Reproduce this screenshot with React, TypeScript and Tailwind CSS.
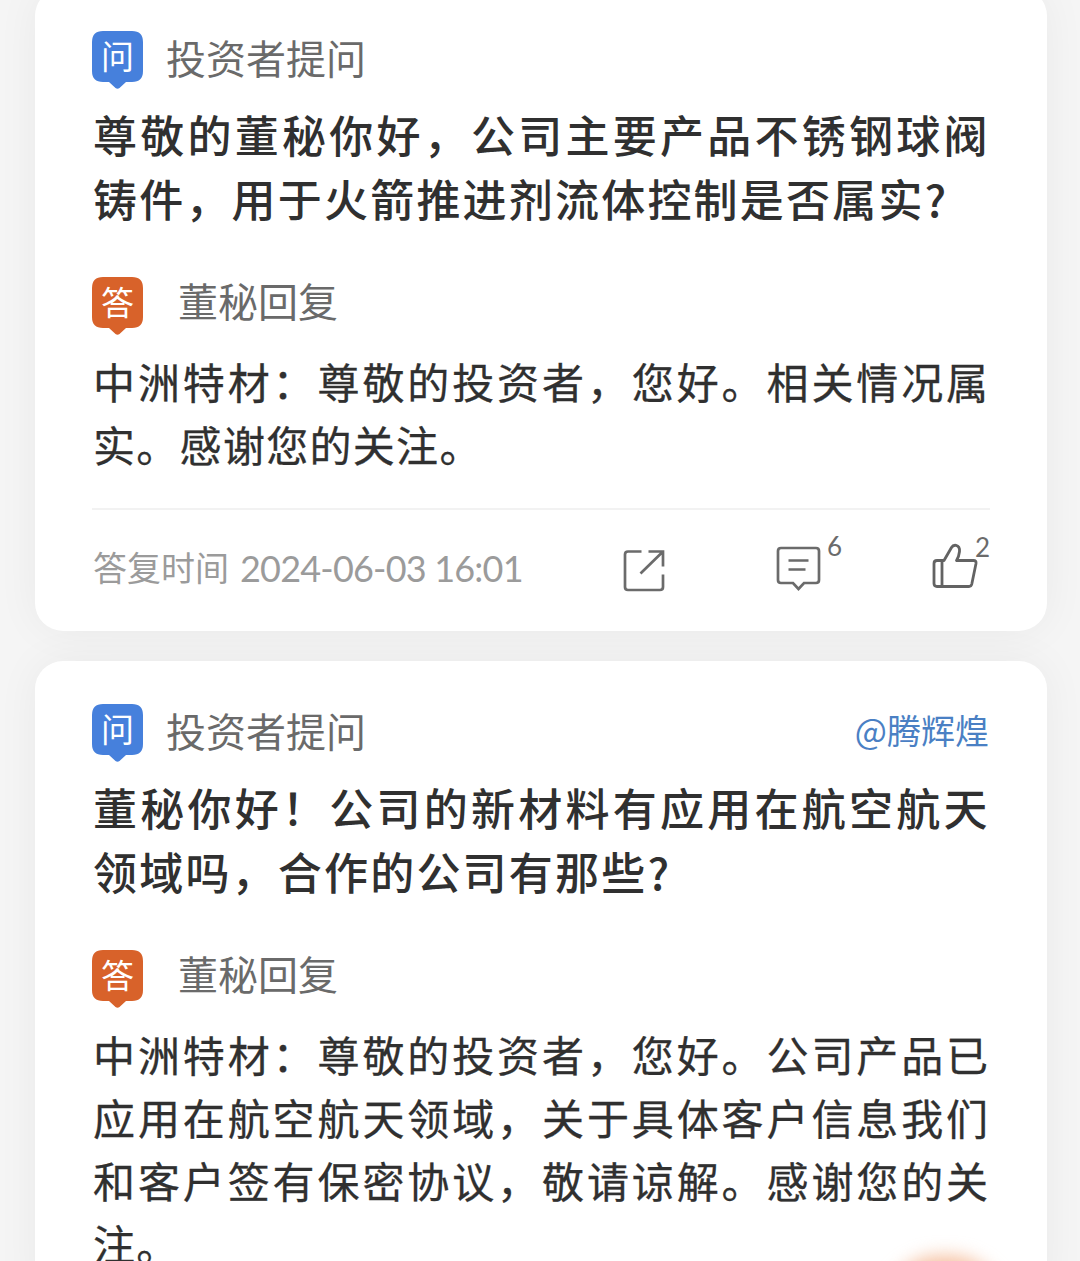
import React from "react";
import clsx from "clsx";

interface Line {
  text: string;
  // tracking is set per line since full lines are justified to the column
  className: string;
}

interface QuestionCardProps {
  user?: string;
  question: Line[];
  answer: Line[];
  className?: string;
  children?: React.ReactNode;
}

const firstQuestion: Line[] = [
  { text: "尊敬的董秘你好，公司主要产品不锈钢球阀", className: "tracking-[3.25px]" },
  { text: "铸件，用于火箭推进剂流体控制是否属实?", className: "tracking-[2.2px]" },
];

const firstAnswer: Line[] = [
  { text: "中洲特材：尊敬的投资者，您好。相关情况属", className: "tracking-[2.9px]" },
  { text: "实。感谢您的关注。", className: "tracking-[1.3px]" },
];

const secondQuestion: Line[] = [
  { text: "董秘你好！公司的新材料有应用在航空航天", className: "tracking-[3.25px]" },
  { text: "领域吗，合作的公司有那些?", className: "tracking-[2.2px]" },
];

const secondAnswer: Line[] = [
  { text: "中洲特材：尊敬的投资者，您好。公司产品已", className: "tracking-[2.9px]" },
  { text: "应用在航空航天领域，关于具体客户信息我们", className: "tracking-[2.9px]" },
  { text: "和客户签有保密协议，敬请谅解。感谢您的关", className: "tracking-[2.9px]" },
  { text: "注。", className: "tracking-[1.3px]" },
];

function Badge({ label, className }: { label: string; className: string }) {
  return (
    <div className={clsx("relative h-[58px] w-[51px] shrink-0", className)}>
      <svg className="absolute inset-0" width="51" height="58" viewBox="0 0 51 58" fill="currentColor">
        <path d="M11 0H40Q51 0 51 11V40Q51 51 40 51H34L27.5 57Q25.5 58.600 23.500 57L17 51H11Q0 51 0 40V11Q0 0 11 0Z" />
      </svg>
      <span className="relative block text-center text-[33px] leading-[48px] text-white">{label}</span>
    </div>
  );
}

function ShareIcon() {
  return (
    <svg width="42" height="43" viewBox="0 0 42 43" fill="none" stroke="#6b6b6b" strokeWidth="2.7">
      <path d="M18.500 2.500H5Q2 2.500 2 5.500V38Q2 41 5 41H37Q40 41 40 38V25.500" />
      <path d="M25.500 2.500H40V17.500M39.500 3L17.500 24.500" />
    </svg>
  );
}

function CommentIcon() {
  return (
    <svg width="45" height="45" viewBox="0 0 45 45" fill="none" stroke="#6b6b6b" strokeWidth="2.7">
      <path d="M5 2H40Q43 2 43 5V34Q43 37 40 37H28L22.500 43L17 37H5Q2 37 2 34V5Q2 2 5 2Z" />
      <path d="M12.500 14.500H32.500M12.500 23.500H29.500" />
    </svg>
  );
}

function ThumbIcon() {
  return (
    <svg width="46" height="46" viewBox="0 0 46 46" fill="none" stroke="#636363" strokeWidth="2.8" strokeLinejoin="round">
      <path d="M12 17.500L19.500 4.500Q21 1.800 24 2.300Q28 3.200 27.500 8.500Q27 13.500 24.500 17.500H41.500Q44.500 17.500 44 20.500L39.800 41Q39.200 43.500 37 43.500H5Q2 43.500 2 40.500V20.500Q2 17.500 5 17.500Z" />
      <path d="M10 17.500V43.500" />
    </svg>
  );
}

function QuestionCard({ user, question, answer, className, children }: QuestionCardProps) {
  return (
    <section
      className={clsx(
        "ml-[35px] h-[643px] w-[1012px] rounded-[28px] bg-white px-[57px] pt-[43px] shadow-[0_0_44px_rgba(0,0,0,0.05)]",
        className
      )}
    >
      <div className="flex h-[58px] items-start">
        <Badge label="问" className="text-[#4680dc]" />
        <span className="ml-[23px] text-[40px] leading-[52px] text-[#6a6a6a]">投资者提问</span>
        {user && <span className="mr-px ml-auto text-[34px] leading-[52px] text-[#4a80c4]">@{user}</span>}
      </div>
      <h2 className="mt-3.5 pl-px text-[44px] leading-[63.5px] font-medium whitespace-nowrap text-[#303030]">
        {question.map((line) => (
          <span key={line.text} className={clsx("block", line.className)}>
            {line.text}
          </span>
        ))}
      </h2>
      <div className="mt-[47px] flex h-[58px] items-start">
        <Badge label="答" className="text-[#d8622a]" />
        <span className="ml-[35px] text-[40px] leading-[46px] text-[#6a6a6a]">董秘回复</span>
      </div>
      <p className="mt-3.5 pl-px text-[42px] leading-[63px] whitespace-nowrap text-[#303030] [-webkit-text-stroke:0.3px_#303030]">
        {answer.map((line) => (
          <span key={line.text} className={clsx("block", line.className)}>
            {line.text}
          </span>
        ))}
      </p>
      {children}
    </section>
  );
}

export default function App() {
  return (
    <main className="relative h-[1261px] w-[1080px] overflow-hidden bg-[#f5f5f5] font-['Noto_Sans_CJK_SC',sans-serif]">
      <div className="flex flex-col gap-[30px]">
        <QuestionCard question={firstQuestion} answer={firstAnswer} className="-mt-3">
          <footer className="mt-[33px] flex h-[122px] items-center border-t-2 border-[#f2f2f2]">
            <div className="flex w-[531px] items-center pb-1 pl-px whitespace-nowrap text-[#9b9b9b]">
              <span className="pb-1 text-[34px]">答复时间</span>
              <span className="ml-[11px] font-[Lato] text-[36px] tracking-[-0.8px]">2024-06-03 16:01</span>
            </div>
            <ShareIcon />
            <div className="relative ml-[111px] pb-1">
              <CommentIcon />
              <span className="absolute -top-[16px] left-[51px] font-[Lato] text-[26px] leading-8 text-[#6b6b6b]">6</span>
            </div>
            <div className="relative ml-[111px] pb-2">
              <ThumbIcon />
              <span className="absolute -top-[12px] left-[43px] font-[Lato] text-[26px] leading-8 text-[#6b6b6b]">2</span>
            </div>
          </footer>
        </QuestionCard>
        <QuestionCard user="腾辉煌" question={secondQuestion} answer={secondAnswer} />
      </div>
      {/* top edge of the floating action button glow */}
      <div className="absolute top-[1256px] left-[885px] h-[110px] w-[120px] rounded-full bg-[#f3b088]/80 blur-[9px]" />
    </main>
  );
}
